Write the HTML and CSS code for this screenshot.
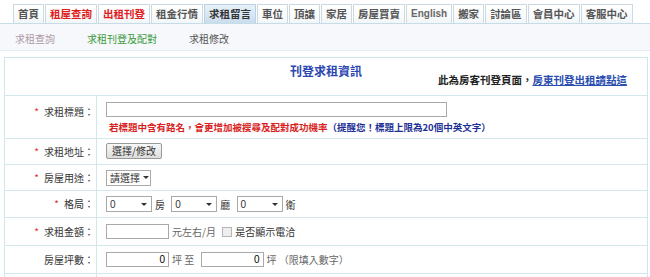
FILE: index.html
```html
<!DOCTYPE html>
<html lang="zh-Hant">
<head>
    <meta charset="UTF-8">
    <title>刊登求租資訊</title>
    <link rel="stylesheet" href="styles.css">
</head>
<body>
    <ul class="tabs">
        <li>首頁</li>
        <li class="red">租屋查詢</li>
        <li class="red">出租刊登</li>
        <li>租金行情</li>
        <li class="active">求租留言</li>
        <li>車位</li>
        <li>頂讓</li>
        <li>家居</li>
        <li>房屋買賣</li>
        <li class="en">English</li>
        <li>搬家</li>
        <li>討論區</li>
        <li>會員中心</li>
        <li>客服中心</li>
    </ul>
    <div class="subnav">
        <a class="sub-muted" href="#">求租查詢</a>
        <a class="sub-current" href="#">求租刊登及配對</a>
        <a class="sub-plain" href="#">求租修改</a>
    </div>

    <div class="panel">
        <div class="panel-head">
            <h2>刊登求租資訊</h2>
            <p class="note">此為房客刊登頁面，<a href="#">房東刊登出租請點這</a></p>
        </div>
        <table class="form-table">
            <tr class="row-title">
                <th><span class="req">*</span>求租標題：</th>
                <td>
                    <input type="text" class="input-title">
                    <p class="hint"><span class="hint-red">若標題中含有路名，會更增加被搜尋及配對成功機率</span><span class="hint-blue">（提醒您！標題上限為20個中英文字）</span></p>
                </td>
            </tr>
            <tr class="row-addr">
                <th><span class="req">*</span>求租地址：</th>
                <td><button class="btn">選擇/修改</button></td>
            </tr>
            <tr class="row-use">
                <th><span class="req">*</span>房屋用途：</th>
                <td><span class="select sel-use">請選擇<i class="arrow"></i></span></td>
            </tr>
            <tr class="row-layout">
                <th><span class="req">*</span>格局：</th>
                <td class="inline">
                    <span class="select sel-num">0<i class="arrow"></i></span><span class="unit">房</span>
                    <span class="select sel-num">0<i class="arrow"></i></span><span class="unit">廳</span>
                    <span class="select sel-num">0<i class="arrow"></i></span><span class="unit">衛</span>
                </td>
            </tr>
            <tr class="row-amount">
                <th><span class="req">*</span>求租金額：</th>
                <td class="inline">
                    <input type="text" class="input-amount"><span class="unit light">元左右/月</span>
                    <label class="check"><span class="box"></span>是否顯示電洽</label>
                </td>
            </tr>
            <tr class="row-area">
                <th>房屋坪數：</th>
                <td class="inline">
                    <input type="text" class="input-area" value="0"><span class="unit light">坪 至</span>
                    <input type="text" class="input-area" value="0"><span class="unit light">坪 （限填入數字）</span>
                </td>
            </tr>
            <tr class="row-last">
                <th></th>
                <td></td>
            </tr>
        </table>
    </div>
</body>
</html>
```
FILE: styles.css
```css
body {
    margin: 0;
    font-family: "Noto Sans CJK TC", "Noto Sans", sans-serif;
    font-size: 10px;
    color: #333;
    background: #fff;
    overflow: hidden;
}

.tabs {
    display: flex;
    list-style: none;
    margin: 4px 0 0;
    padding: 0 0 0 13px;
    border-bottom: 1px solid #c6dce6;
    height: 19px;
}

.tabs li {
    flex-shrink: 0;
    white-space: nowrap;
    height: 18px;
    line-height: 18px;
    padding: 0 4px;
    margin-right: 1px;
    border: 1px solid #cdd9e0;
    border-bottom: none;
    background: linear-gradient(#ffffff, #f3f6f8);
    font-size: 10.5px;
    font-weight: bold;
    color: #555;
}

.tabs li.red {
    color: #e01c1c;
}

.tabs li.en {
    font-family: "Liberation Sans", sans-serif;
    font-size: 10px;
    color: #666;
}

.tabs li.active {
    background: linear-gradient(#e8f1f8, #c9ddee);
    color: #333;
    border-color: #bcd2e2;
}

.subnav {
    display: flex;
    align-items: center;
    height: 23px;
    padding: 3px 0 0 15px;
    background: #f6f8fb;
    border-bottom: 1px solid #e4ecf1;
    gap: 32px;
}

.subnav a {
    text-decoration: none;
    font-size: 10px;
    white-space: nowrap;
}

.sub-muted {
    color: #ae9aa8;
}

.sub-current {
    color: #3a9a3a;
}

.sub-plain {
    color: #555;
}

.panel {
    margin: 6px 2px 0 4px;
    border: 1px solid #cfe6ec;
    border-bottom: none;
}

.panel-head {
    height: 37px;
    border-bottom: 1px solid #d3e7ec;
}

.panel-head h2 {
    margin: 0;
    padding-top: 5px;
    text-align: center;
    font-size: 12px;
    font-weight: bold;
    color: #2a46b0;
    line-height: 16px;
}

.note {
    margin: -6px 0 0;
    text-align: right;
    padding-right: 20px;
    font-size: 10.5px;
    font-weight: bold;
    color: #222;
    line-height: 14px;
}

.note a {
    color: #2a4db0;
    text-decoration: underline;
}

.form-table {
    width: 100%;
    border-collapse: collapse;
}

.form-table th {
    width: 89px;
    padding: 0 2px 0 0;
    border-right: 1px solid #d3e7ec;
    border-bottom: 1px solid #d3e7ec;
    text-align: right;
    font-weight: normal;
    color: #333;
    vertical-align: middle;
    white-space: nowrap;
}

.form-table td {
    padding: 0 0 0 9px;
    border-bottom: 1px solid #d3e7ec;
    vertical-align: middle;
    white-space: nowrap;
}

.req {
    color: #e03030;
    margin-right: 5px;
}

.row-title {
    height: 42px;
}

.row-title th {
    vertical-align: top;
    padding-top: 8px;
}

.row-title td {
    vertical-align: top;
    padding-top: 6px;
}

.row-addr {
    height: 26px;
}

.row-use {
    height: 26px;
}

.row-layout {
    height: 27px;
}

.row-amount {
    height: 28px;
}

.row-area {
    height: 28px;
}

.row-last {
    height: 10px;
}

input[type="text"] {
    box-sizing: border-box;
    height: 15px;
    border: 1px solid #a9a9a9;
    padding: 0 3px;
    font-family: "Liberation Sans", sans-serif;
    font-size: 10px;
    margin: 0;
    vertical-align: middle;
}

.input-title {
    width: 341px;
    display: block;
}

.input-amount {
    width: 63px;
    height: 17px;
}

.input-area {
    width: 63px;
    height: 16px;
    text-align: right;
}

.hint {
    margin: 3px 0 0 3px;
    font-size: 9.5px;
    font-weight: bold;
    line-height: 14px;
}

.hint-red {
    color: #d81e1e;
}

.hint-blue {
    color: #1c2f96;
}

.btn {
    height: 16px;
    width: 56px;
    padding: 0;
    border: 1px solid #9a9a9a;
    border-radius: 2px;
    background: linear-gradient(#f8f8f8, #dcdcdc);
    font-family: "Noto Sans CJK TC", sans-serif;
    font-size: 10px;
    line-height: 14px;
    color: #333;
}

.select {
    display: inline-flex;
    align-items: center;
    justify-content: space-between;
    box-sizing: border-box;
    height: 16px;
    border: 1px solid #a9a9a9;
    padding: 0 4px 0 3px;
    background: #fff;
    font-size: 10px;
    vertical-align: middle;
    white-space: nowrap;
}

.sel-use {
    width: 45px;
}

.sel-num {
    width: 46px;
    font-family: "Liberation Sans", sans-serif;
}

.arrow {
    width: 0;
    height: 0;
    margin-left: 3px;
    border-left: 3px solid transparent;
    border-right: 3px solid transparent;
    border-top: 3px solid #333;
}

.inline .unit {
    margin: 0 4px 0 3px;
    vertical-align: middle;
}

.unit.light {
    color: #666;
}

.check {
    display: inline-flex;
    align-items: center;
    color: #333;
    vertical-align: middle;
}

.box {
    width: 8px;
    height: 8px;
    border: 1px solid #b5b5b5;
    background: #eee;
    margin-right: 3px;
}
```
